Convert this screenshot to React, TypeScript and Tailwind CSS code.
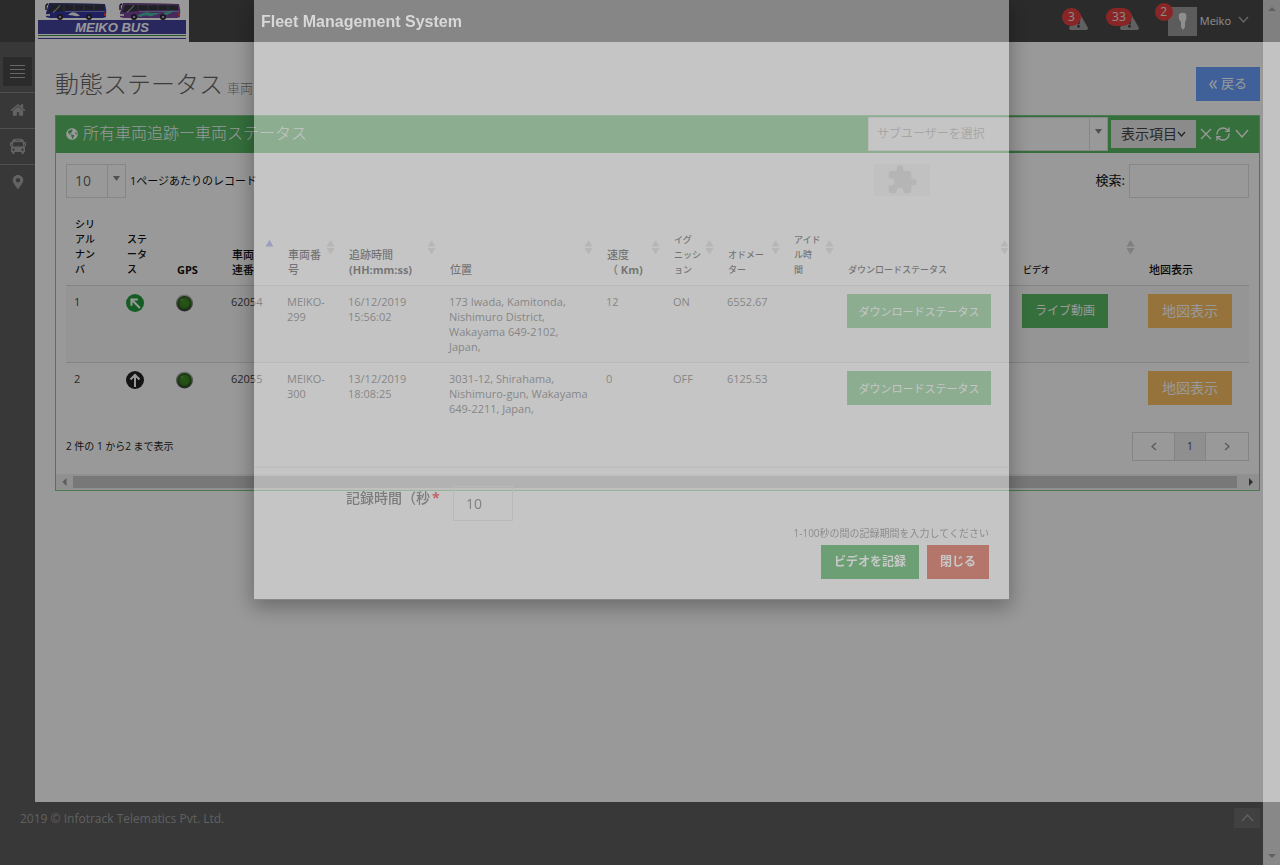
import { ReactNode } from "react";
import { FaExclamationTriangle, FaGlobeAmericas, FaMapMarkerAlt } from "react-icons/fa";
import { MdExtension } from "react-icons/md";
import { RefreshCw } from "lucide-react";

type Column = { lines: string[]; latin?: string; width: string; sort?: "both" | "asc"; size?: string };

const columns: Column[] = [
  { lines: ["シリ", "アル", "ナン", "バ"], width: "w-[52px]", size: "text-[10px]" },
  { lines: ["ステ", "ータ", "ス"], width: "w-[50px]", size: "text-[10px]" },
  { lines: [""], latin: "GPS", width: "w-[55px]" },
  { lines: ["車両", "連番"], width: "w-[56px]", sort: "asc" },
  { lines: ["車両番", "号"], width: "w-[61px]", sort: "both" },
  { lines: ["追跡時間", ""], latin: "(HH:mm:ss)", width: "w-[101px]", sort: "both" },
  { lines: ["位置"], width: "w-[157px]", sort: "both" },
  { lines: ["速度", "（"], latin: " Km)", width: "w-[67px]", sort: "both" },
  { lines: ["イグ", "ニッシ", "ョン"], width: "w-[54px]", sort: "both", size: "text-[9px]" },
  { lines: ["オドメー", "ター"], width: "w-[66px]", sort: "both", size: "text-[9px]" },
  { lines: ["アイド", "ル時", "間"], width: "w-[54px]", sort: "both", size: "text-[9px]" },
  { lines: ["ダウンロードステータス"], width: "w-[175px]", sort: "both", size: "text-[9px]" },
  { lines: ["ビデオ"], width: "w-[126px]", sort: "both", size: "text-[9px]" },
  { lines: ["地図表示"], width: "w-[109px]" },
];

const rows = [
  {
    id: "1", moving: true, serial: "62054", number: "MEIKO-\n299", time: "16/12/2019\n15:56:02",
    place: "173 Iwada, Kamitonda,\nNishimuro District,\nWakayama 649-2102,\nJapan,",
    speed: "12", ignition: "ON", odometer: "6552.67", live: true,
  },
  {
    id: "2", moving: false, serial: "62055", number: "MEIKO-\n300", time: "13/12/2019\n18:08:25",
    place: "3031-12, Shirahama,\nNishimuro-gun, Wakayama\n649-2211, Japan,",
    speed: "0", ignition: "OFF", odometer: "6125.53", live: false,
  },
];

const glyphs = {
  cross: { w: 12, h: 12, d: "M1 1L11 11M11 1L1 11" },
  down: { w: 14, h: 9, d: "M1 1L7 8L13 1" },
  downSmall: { w: 9, h: 6, d: "M1 1L4.5 5L8 1" },
  downMedium: { w: 11, h: 7, d: "M1 1L5.5 6L10 1" },
  up: { w: 13, h: 8, d: "M1 7L6.500 1L12 7" },
  left: { w: 6, h: 9, d: "M5 1L1 4.5L5 8" },
  right: { w: 6, h: 9, d: "M1 1L5 4.5L1 8" },
  doubleLeft: { w: 8, h: 9, d: "M4 0.5L1 4.5L4 8.5M7.5 0.5L4.5 4.5L7.5 8.5" },
};

function Glyph({ name, className = "" }: { name: keyof typeof glyphs; className?: string }) {
  const g = glyphs[name];
  return (
    <svg width={g.w} height={g.h} viewBox={`0 0 ${g.w} ${g.h}`} className={`shrink-0 ${className}`} aria-hidden="true">
      <path d={g.d} fill="none" stroke="currentColor" strokeWidth="1.4" />
    </svg>
  );
}

function HomeIcon() {
  return (
    <svg width="16" height="16" viewBox="0 0 1792 1792" fill="currentColor" aria-hidden="true">
      <path d="M1472 992v480q0 26-19 45t-45 19h-384v-384h-256v384h-384q-26 0-45-19t-19-45v-480q0-1 .5-3t.5-3l575-474 575 474q1 2 1 6zm223-69l-62 74q-8 9-21 11h-3q-13 0-21-7l-692-577-692 577q-12 8-24 7-13-2-21-11l-62-74q-8-10-7-23.5t11-21.5l719-599q32-26 76-26t76 26l244 204v-195q0-14 9-23t23-9h192q14 0 23 9t9 23v408l219 182q10 8 11 21.500t-7 23.500z" />
    </svg>
  );
}

function BusIcon() {
  return (
    <svg width="16" height="16" viewBox="0 0 16 16" fill="currentColor" aria-hidden="true">
      <path
        fillRule="evenodd"
        d="M3 1.500Q8 -0.500 13 1.500Q13.800 2 14 4H15Q16 4 16 5V8H15V5.500H14.200L15 9.500V14H14V15Q14 16 13 16H12.500Q11.500 16 11.500 15V14H4.500V15Q4.500 16 3.500 16H3Q2 16 2 15V14H1V9.500L1.800 5.500H1V8H0V5Q0 4 1 4H2Q2.200 2 3 1.500ZM5.500 1.800V2.600H10.500V1.800ZM3.500 4L2.700 8.500H13.300L12.500 4ZM3.500 10.500A1.100 1.100 0 1 0 3.510 10.500ZM12.500 10.500A1.100 1.100 0 1 0 12.510 10.500Z"
      />
    </svg>
  );
}

function BusArt({ x, body, roof, accent }: { x: number; body: string; roof: string; accent: string }) {
  return (
    <g transform={`translate(${x} 2)`}>
      <path d="M4 1 L60 2 Q62 8 61 15 L58 16 H5 L1 15 L1 11 Z" fill={body} />
      <path d="M4 1 L60 2 V4 L4 3Z" fill={roof} />
      <path d="M6 3 L59 3.500 L59 8 L22 8.500 L8 10 L3 10.500 Z" fill="#33363f" />
      <path d="M19 3V8.500M29 3V8M39 3V8M49 3V8" stroke="#5b5b68" strokeWidth="0.8" />
      <path d="M15 3.500 Q12 7 8 10.500" stroke="#a9a9b4" strokeWidth="1.1" fill="none" />
      <path d="M20 9.500H60" stroke="#9092c0" strokeWidth="0.8" />
      <path d="M1 3V8M1 3L3 2" stroke="#202020" strokeWidth="1.4" fill="none" />
      <path d="M23 13 Q26 9 31 11 L35 13.500 Q32 15 28 13.500 Z" fill={accent} />
      <rect x="1" y="12" width="4" height="2" fill="#ddd" />
      <rect x="59" y="11" width="2" height="3" fill="#e63b3b" />
      <circle cx="15" cy="15" r="3" fill="#24242c" />
      <circle cx="15" cy="15" r="1.3" fill="#a6a6ae" />
      <circle cx="44" cy="15" r="3" fill="#24242c" />
      <circle cx="44" cy="15" r="1.3" fill="#a6a6ae" />
    </g>
  );
}

function Logo() {
  return (
    <svg width="154" height="42" viewBox="0 0 154 42" role="img" aria-label="Meiko Bus" className="block bg-white">
      <BusArt x={10} body="#3436a0" roof="#3a3d66" accent="#f0f0f4" />
      <BusArt x={84} body="#7a459c" roof="#6b4a82" accent="#49b9a6" />
      <path d="M102 16 Q108 11 116 13 L126 13 L120 15 Q110 14 106 17Z M128 14 Q132 10 140 11 L132 15Z" fill="#49b9a6" />
      <rect x="3" y="20" width="148" height="14" fill="#44449f" />
      <text x="77" y="32" textAnchor="middle" fill="#fff" className="font-['Liberation_Sans',sans-serif] text-[13px] font-bold italic">MEIKO BUS</text>
      <path d="M3 35.5H151" stroke="#45924e" />
      <path d="M3 38.5H151" stroke="#44449f" />
    </svg>
  );
}

function SortIcon({ kind }: { kind: "both" | "asc" }) {
  return (
    <svg width="9" height="16" viewBox="0 0 9 16" className="shrink-0 self-center" aria-hidden="true">
      <path d="M4.5 1L8.500 7.500H0.500Z" fill={kind === "asc" ? "#8a8aec" : "#d4d4d4"} />
      {kind === "both" && <path d="M4.5 15.500L8.500 9H0.500Z" fill="#d4d4d4" />}
    </svg>
  );
}

function StatusIcon({ moving }: { moving: boolean }) {
  return (
    <svg width="18" height="18" viewBox="0 0 18 18" role="img" aria-label={moving ? "Moving" : "Stopped"}>
      <circle cx="9" cy="9" r="9" fill={moving ? "#249c3d" : "#222"} />
      <g transform={moving ? "rotate(-45 9 9)" : undefined} stroke="#fff" strokeWidth="2" fill="none">
        <path d="M9 16V4" />
        <path d="M4.5 8.5L9 4L13.5 8.5" />
      </g>
    </svg>
  );
}

function GpsLamp() {
  return (
    <svg width="18" height="18" viewBox="0 0 18 18" role="img" aria-label="GPS on">
      <defs>
        <linearGradient id="ring" x1="0" y1="0" x2="0" y2="1">
          <stop offset="0" stopColor="#c4c4c4" />
          <stop offset="1" stopColor="#3d3d3d" />
        </linearGradient>
        <radialGradient id="lamp">
          <stop offset="0" stopColor="#429127" />
          <stop offset="0.7" stopColor="#3a8022" />
          <stop offset="1" stopColor="#1c4411" />
        </radialGradient>
      </defs>
      <circle cx="8.5" cy="9" r="8.5" fill="url(#ring)" />
      <circle cx="8.5" cy="9" r="7" fill="url(#lamp)" />
      <ellipse cx="6" cy="6" rx="1.5" ry="1" fill="#5d9a4a" />
    </svg>
  );
}

function Action({ tone, size, children }: { tone: string; size: string; children: ReactNode }) {
  return (
    <button type="button" className={`h-[34px] whitespace-nowrap text-white ${tone} ${size}`}>
      {children}
    </button>
  );
}

function Notice({ count }: { count: string }) {
  return (
    <button type="button" aria-label={`${count} alerts`} className="relative flex h-[42px] w-9 items-center justify-end">
      <FaExclamationTriangle className="size-[19px] text-[#a0a0a0]" />
      <span className="absolute top-2 right-[7px] flex h-[18px] min-w-[18px] items-center justify-center rounded-full bg-[#e4403f] px-1.5 text-xs text-[#e8e8e8]">
        {count}
      </span>
    </button>
  );
}

function Header() {
  return (
    <header className="flex h-[42px] justify-between bg-[#484848] pr-[31px] pl-[35px]">
      <a href="#home"><Logo /></a>
      <div className="flex">
        <div className="mr-[29px] flex gap-[15px]">
          <Notice count="3" />
          <Notice count="33" />
        </div>
        <button type="button" className="relative flex items-center text-[11px] text-[#eee]">
          <svg width="29" height="29" viewBox="0 0 29 29" className="mr-[3px]" aria-hidden="true">
            <rect width="29" height="29" fill="#9a9a9a" />
            <path d="M11 7Q14.500 4.500 18 7Q19 12 17 15L17 20L15 23L13 20L13 15Q10 12 11 7Z" fill="#eee" />
          </svg>
          <span className="absolute top-[3px] -left-[13px] flex size-[18px] items-center justify-center rounded-full bg-[#e4403f] text-xs text-[#e8e8e8]">2</span>
          Meiko
          <Glyph name="downMedium" className="mb-1 ml-[7px] text-[#aaa]" />
        </button>
      </div>
    </header>
  );
}

function Sidebar() {
  const item = "flex h-9 items-center justify-center border-t border-[#888] pb-0.5 text-[#a5a5a5]";
  return (
    <nav className="w-[35px] shrink-0 bg-[#5e5e5e] pt-[15px]">
      <button type="button" aria-label="Menu" className="mx-auto mb-1.5 flex size-[29px] flex-col items-center justify-center gap-[3px] bg-[#484848]">
        <span className="h-px w-[15px] bg-[#aaa]" />
        <span className="h-px w-[15px] bg-[#aaa]" />
        <span className="h-px w-[15px] bg-[#aaa]" />
        <span className="h-px w-[15px] bg-[#aaa]" />
      </button>
      <a href="#dashboard" aria-label="Home" className={item}><HomeIcon /></a>
      <a href="#vehicles" aria-label="Vehicles" className={item}><BusIcon /></a>
      <a href="#map" aria-label="Map" className={item}><FaMapMarkerAlt className="size-3.5" /></a>
    </nav>
  );
}

function Picker({ label, value, options, className }: { label: string; value: string; options: string[]; className: string }) {
  return (
    <span className={`flex h-[34px] items-stretch border border-[#e0e0e0] bg-white ${className}`}>
      <select aria-label={label} defaultValue={value} className="min-w-0 flex-1 appearance-none bg-transparent px-2">
        {options.map((o) => <option key={o}>{o}</option>)}
      </select>
      <span className="pointer-events-none flex w-[18px] justify-center border-l border-[#e0e0e0] pt-2.5 text-[#888]">
        <svg width="7" height="7" viewBox="0 0 7 7" aria-hidden="true"><path d="M0 1H7L3.500 6Z" fill="currentColor" /></svg>
      </span>
    </span>
  );
}

function ColumnLabel({ column }: { column: Column }) {
  const last = column.lines.length - 1;
  return (
    <span className={`whitespace-pre leading-[15px] ${column.size ?? "text-[11px]"}`}>
      {column.lines.map((line, i) => (
        <span key={i} className="flex">
          {line && <span>{line}</span>}
          {i === last && column.latin && <b className="font-bold">{column.latin}</b>}
        </span>
      ))}
    </span>
  );
}

function VehicleTable() {
  return (
    <table className="w-full table-fixed border-collapse text-left text-[11px] leading-[15px] text-[#444]">
      <thead>
        <tr className="border-b border-[#ddd]">
          {columns.map((c, i) => (
            <th key={i} className={`py-2 pr-[5px] pl-[9px] font-medium text-[#111] ${c.width}`}>
              <div className="flex h-[60px] items-end justify-between">
                <ColumnLabel column={c} />
                {c.sort && <SortIcon kind={c.sort} />}
              </div>
            </th>
          ))}
        </tr>
      </thead>
      <tbody className="align-top whitespace-pre">
        {rows.map((r) => (
          <tr key={r.id} className="border-b border-[#ddd] odd:bg-[#f9f9f9] last:border-0">
            <td className="p-2">{r.id}</td>
            <td className="p-2"><StatusIcon moving={r.moving} /></td>
            <td className="p-2"><GpsLamp /></td>
            <td className="p-2">{r.serial}</td>
            <td className="p-2">{r.number}</td>
            <td className="p-2">{r.time}</td>
            <td className="p-2">{r.place}</td>
            <td className="p-2">{r.speed}</td>
            <td className="p-2">{r.ignition}</td>
            <td className="p-2">{r.odometer}</td>
            <td className="p-2" />
            <td className="p-2"><Action tone="w-36 bg-[#58b964]" size="text-[11px]">ダウンロードステータス</Action></td>
            <td className="p-2">{r.live && <Action tone="w-[86px] bg-[#58b964]" size="text-xs">ライブ動画</Action>}</td>
            <td className="p-2"><Action tone="w-[84px] bg-[#fcc064]" size="text-sm">地図表示</Action></td>
          </tr>
        ))}
      </tbody>
    </table>
  );
}

function Portlet() {
  return (
    <section className="border border-[#7acb86] bg-white">
      <div className="flex h-[37px] items-center bg-[#58b964] px-2.5 pb-0.5 text-white">
        <FaGlobeAmericas className="mr-[5px] size-3" />
        <h2 className="flex-1 pb-0.5 text-base leading-5 font-light whitespace-nowrap">所有車両追跡ー車両ステータス</h2>
        <Picker label="サブユーザー" value="サブユーザーを選択" options={["サブユーザーを選択"]} className="mr-[3px] w-60 text-xs text-[#a5a5a5]" />
        <button type="button" className="mr-1 flex h-7 w-[85px] items-center justify-center bg-[#e8e8e8] text-sm text-[#444]">
          表示項目<Glyph name="downSmall" />
        </button>
        <button type="button" aria-label="Remove"><Glyph name="cross" /></button>
        <button type="button" aria-label="Reload" className="mr-1 ml-[3px]"><RefreshCw className="size-4" strokeWidth={2} /></button>
        <button type="button" aria-label="Collapse"><Glyph name="down" /></button>
      </div>
      <div className="px-2.5 pt-[11px] pb-[13px]">
        <div className="mb-[11px] flex items-center justify-between text-[#111]">
          <div className="flex items-center gap-1">
            <Picker label="レコード" value="10" options={["10", "25", "50"]} className="w-[60px] text-sm text-[#666]" />
            <span className="text-[11px]">1ページあたりのレコード</span>
          </div>
          <label className="flex items-center gap-1 text-[13px]">
            検索:
            <input type="text" className="h-[34px] w-[120px] border border-[#e0e0e0] bg-white px-2" />
          </label>
        </div>
        <VehicleTable />
        <div className="mt-2 flex items-center justify-between text-[#222]">
          <p className="text-[10px]">2 件の 1 から2 まで表示</p>
          <div className="flex h-[29px] border border-[#ddd] text-[11px]">
            <button type="button" aria-label="Previous" className="flex w-[41px] items-center justify-center text-[#999]"><Glyph name="left" /></button>
            <button type="button" className="w-8 border-x border-[#ddd] bg-[#eee] text-[#555]">1</button>
            <button type="button" aria-label="Next" className="flex w-[42px] items-center justify-center text-[#999]"><Glyph name="right" /></button>
          </div>
        </div>
      </div>
      <div className="flex h-4 items-center bg-[#f1f1f1]">
        <svg width="17" height="8" viewBox="0 0 17 8" aria-hidden="true"><path d="M10.500 0V8L6.500 4Z" fill="#999" /></svg>
        <div className="h-3 flex-1 bg-[#c8c8c8]" />
        <svg width="22" height="8" viewBox="0 0 22 8" aria-hidden="true"><path d="M12 0V8L16 4Z" fill="#505050" /></svg>
      </div>
    </section>
  );
}

function RecordDialog() {
  return (
    <div role="dialog" aria-label="Fleet Management System" className="w-[755px] border-b border-[#888] bg-white/43 shadow-[0_6px_20px_2px_rgba(0,0,0,0.3)]">
      <h2 className="px-[7px] py-2.5 font-['Liberation_Sans',Arial,sans-serif] text-base leading-6 font-bold text-[#d8d8d8]">Fleet Management System</h2>
      <div className="flex h-[422px] items-start justify-end pt-30 pr-[79px]">
        <div className="flex h-8 w-14 items-center justify-center bg-black/[0.02] text-[#b5b5b5]">
          <MdExtension className="size-8" />
        </div>
      </div>
      <div className="border-t-2 border-[#c0c0c0] pt-[18px] pr-5 pb-5">
        <div className="flex items-start pl-[92px]">
          <label htmlFor="seconds" className="w-[107px] text-sm leading-6 font-medium whitespace-nowrap text-[#7c7c7c]">
            記録時間（秒<span className="ml-0.5 font-bold text-[#c46060]">*</span>
          </label>
          <input id="seconds" type="text" defaultValue="10" className="h-[35px] w-[60px] border border-[#b9b9b9] bg-transparent px-3 text-sm text-[#808080]" />
        </div>
        <p className="mt-1 mb-1 text-right text-[10px] leading-4 text-[#8c8c8c]">1-100秒の間の記録期間を入力してください</p>
        <div className="flex justify-end gap-2">
          <button type="button" className="h-[34px] bg-[#6ca074] px-[13px] text-xs font-bold text-[#c8c8c8]">ビデオを記録</button>
          <button type="button" className="h-[34px] bg-[#b4756b] px-[13px] text-xs font-bold text-[#c8c8c8]">閉じる</button>
        </div>
      </div>
    </div>
  );
}

export default function App() {
  return (
    <div className="flex min-h-screen flex-col overflow-hidden bg-[#5e5e5e] font-['Open_Sans','Noto_Sans_CJK_JP',sans-serif]">
      <Header />
      <div className="flex flex-1">
        <Sidebar />
        <main className="min-w-0 flex-1 bg-white px-5 pt-[25px]">
          <div className="mb-3.5 flex h-[34px] items-center justify-between">
            <h1 className="text-2xl font-light whitespace-nowrap text-[#666]">
              動態ステータス<small className="ml-1 text-[13px] text-[#888]">車両</small>
            </h1>
            <a href="#back" className="flex h-[34px] items-center gap-1 bg-[#6aa1ff] px-[13px] text-[13px] text-white">
              <Glyph name="doubleLeft" />戻る
            </a>
          </div>
          <Portlet />
        </main>
      </div>
      <footer className="flex h-[63px] items-start justify-between py-1.5 pr-5 pl-5 text-xs leading-[22px] text-[#a0a0a0]">
        <p>2019 © Infotrack Telematics Pvt. Ltd.</p>
        <a href="#top" aria-label="Top" className="flex h-5 w-[26px] items-center justify-center bg-[#6d6d6d]"><Glyph name="up" /></a>
      </footer>

      <div className="fixed inset-0 flex items-start overflow-hidden bg-black/40">
        <div className="flex flex-1 justify-center"><RecordDialog /></div>
        <div className="flex w-[17px] flex-col items-center justify-between self-stretch bg-white/40 py-[7px]" aria-hidden="true">
          <svg width="8" height="4" viewBox="0 0 8 4"><path d="M0 4H8L4 0Z" fill="#606060" /></svg>
          <svg width="8" height="4" viewBox="0 0 8 4"><path d="M0 0H8L4 4Z" fill="#606060" /></svg>
        </div>
      </div>
    </div>
  );
}
